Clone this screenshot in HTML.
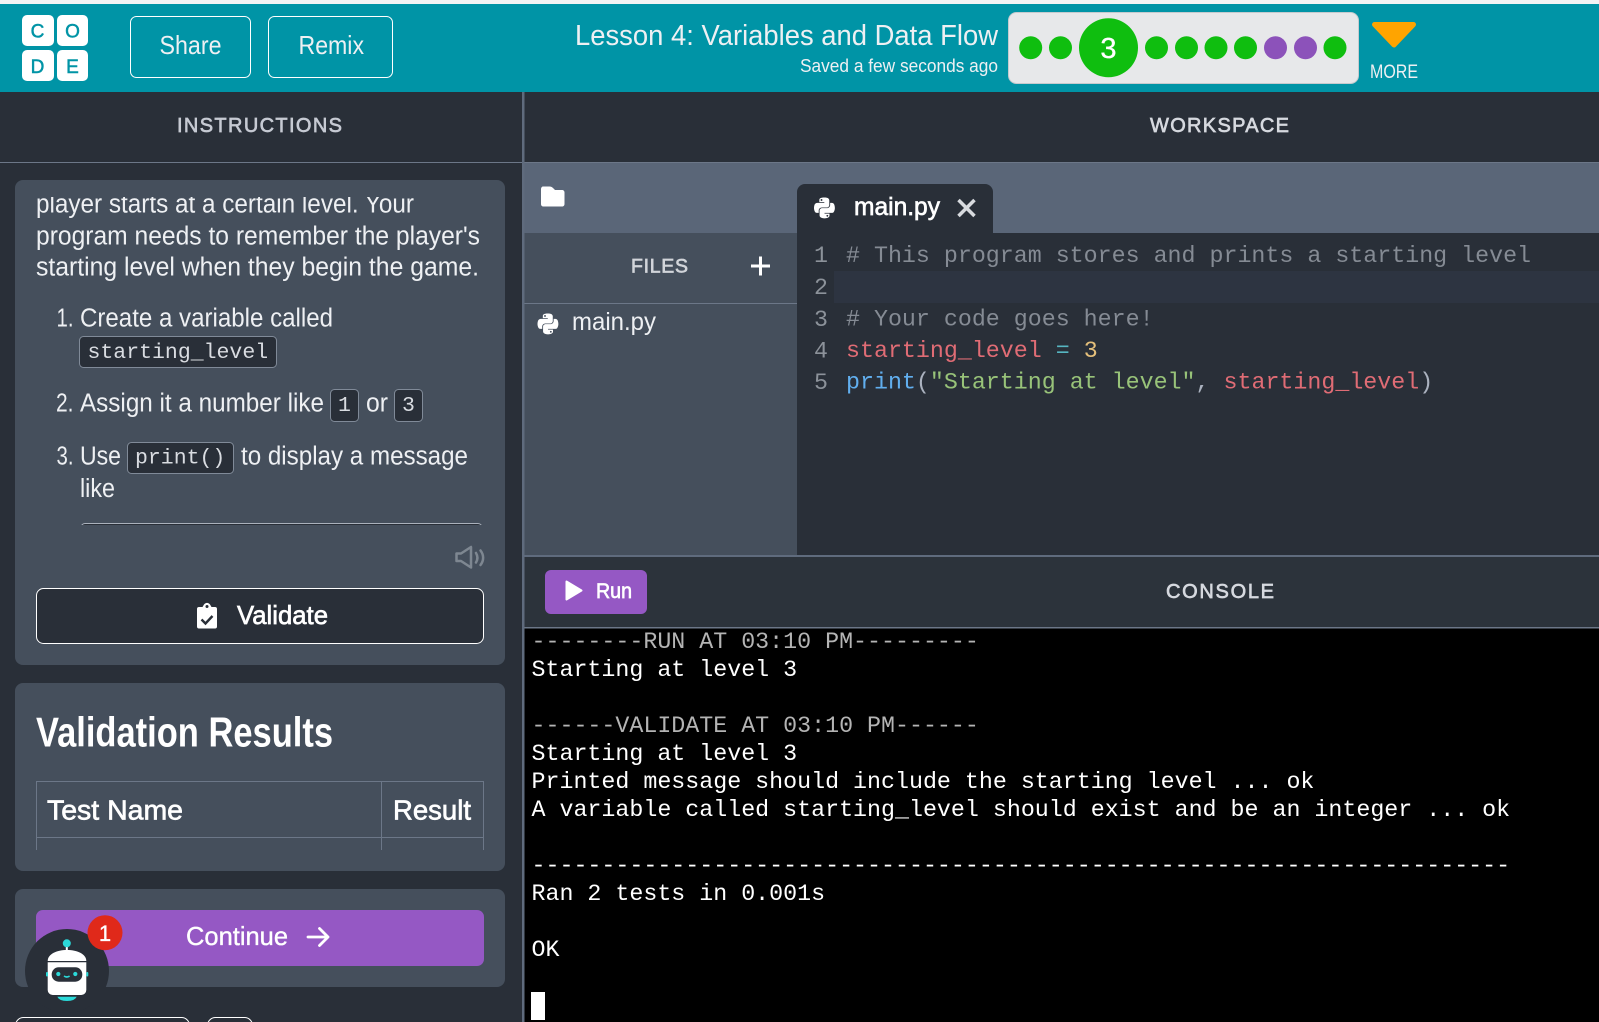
<!DOCTYPE html>
<html lang="en"><head><meta charset="utf-8"><title>Lesson 4: Variables and Data Flow</title>
<style>
html,body{margin:0;padding:0;width:1599px;height:1022px;overflow:hidden;background:#292f38}
svg{display:block}
text{font-family:"Liberation Sans",sans-serif;fill:#eef0f3;white-space:pre}
.m{font-family:"Liberation Mono",monospace}
.med{stroke-width:.35;stroke:currentColor}
.sb{stroke-width:.65;stroke:currentColor}
.con{font-size:23.3px;fill:#fff}
.gr{fill:#b4b4b4}
.ed{font-size:23.3px}
.num{fill:#8c929a}
.cm{fill:#858b94}
.lg{font-size:19px;fill:#0094a6;stroke:#0094a6;stroke-width:.5}
</style></head><body>
<svg xmlns="http://www.w3.org/2000/svg" width="1599" height="1022" viewBox="0 0 1599 1022">
<defs>
<clipPath id="c1"><rect x="15" y="197" width="490" height="328"/></clipPath>
<path id="py" d="M439.8 200.5c-7.7-30.9-22.3-54.2-53.4-54.2h-40.1v47.4c0 36.8-31.2 67.8-66.8 67.8H172.7c-29.2 0-53.4 25-53.4 54.3v101.8c0 29 25.2 46 53.4 54.3 33.8 9.9 66.3 11.7 106.8 0 26.9-7.8 53.4-23.5 53.4-54.3v-40.7H226.2v-13.6h160.2c31.1 0 42.6-21.7 53.4-54.2 11.2-33.5 10.7-65.7 0-108.6zM286.2 404c11.1 0 20.1 9.1 20.1 20.3 0 11.3-9 20.4-20.1 20.4-11 0-20.1-9.2-20.1-20.4.1-11.3 9.1-20.3 20.1-20.3zM167.8 248.1h106.8c29.7 0 53.4-24.5 53.4-54.3V91.9c0-29-24.4-50.7-53.4-55.6-35.8-5.9-74.7-5.6-106.8.1-45.2 8-53.4 24.7-53.4 55.6v40.7h106.9v13.6h-147c-31.1 0-58.3 18.7-66.8 54.2-9.8 40.7-10.2 66.1 0 108.6 7.6 31.6 25.7 54.2 56.8 54.2H101v-48.8c0-35.3 30.5-66.4 66.8-66.4zm-6.7-142.6c-11.1 0-20.1-9.1-20.1-20.3.1-11.3 9-20.4 20.1-20.4 11 0 20.1 9.2 20.1 20.4s-9 20.3-20.1 20.3z"/>
</defs>

<!-- page -->
<rect width="1599" height="1022" fill="#292f38"/>
<rect width="1599" height="4" fill="#f2f3f4"/>
<rect y="4" width="1599" height="88" fill="#0094a6"/>

<!-- logo -->
<g fill="#fff">
<rect x="22" y="15" width="32" height="31" rx="5"/><rect x="57" y="15" width="31" height="31" rx="5"/>
<rect x="22" y="50" width="32" height="31" rx="5"/><rect x="57" y="50" width="31" height="31" rx="5"/>
</g>
<g text-anchor="middle">
<text class="lg" x="37.500" y="37.500">C</text><text class="lg" x="72.500" y="37.500">O</text>
<text class="lg" x="37.500" y="73">D</text><text class="lg" x="72.500" y="73">E</text>
</g>

<!-- header buttons -->
<rect x="130.5" y="16.5" width="120" height="61" rx="6" fill="none" stroke="#fff"/>
<rect x="268.5" y="16.5" width="124" height="61" rx="6" fill="none" stroke="#fff"/>
<text x="159.5" y="54" font-size="26" textLength="62" lengthAdjust="spacingAndGlyphs">Share</text>
<text x="298.5" y="54" font-size="26" textLength="65.5" lengthAdjust="spacingAndGlyphs">Remix</text>

<text x="575" y="45" font-size="29" textLength="423" lengthAdjust="spacingAndGlyphs">Lesson 4: Variables and Data Flow</text>
<text x="800" y="72" font-size="18" textLength="198" lengthAdjust="spacingAndGlyphs">Saved a few seconds ago</text>

<!-- progress -->
<rect x="1008.5" y="12.5" width="350" height="71" rx="8" fill="#e7e8ea" stroke="#c6cace"/>
<g fill="#0fbe0f">
<circle cx="1030.7" cy="47.7" r="11.5"/><circle cx="1060.5" cy="47.7" r="11.5"/>
<circle cx="1108.5" cy="47.7" r="29.5"/>
<circle cx="1156.5" cy="47.7" r="11.5"/><circle cx="1186.5" cy="47.7" r="11.5"/><circle cx="1216" cy="47.7" r="11.5"/><circle cx="1245.5" cy="47.7" r="11.5"/><circle cx="1335" cy="47.7" r="11.5"/>
</g>
<circle cx="1275.5" cy="47.7" r="11.5" fill="#8c52ba"/><circle cx="1305.5" cy="47.7" r="11.5" fill="#8c52ba"/>
<text x="1108.5" y="58" font-size="29" class="med" text-anchor="middle" style="fill:#fff;color:#fff">3</text>
<path d="M1374.500 24.500h39L1394 45z" fill="#ffa400" stroke="#ffa400" stroke-width="5" stroke-linejoin="round"/>
<text x="1370" y="78" font-size="19" textLength="48" lengthAdjust="spacingAndGlyphs">MORE</text>

<!-- instructions panel -->
<rect x="0" y="162" width="522" height="1" fill="#6c7788"/>
<text x="177" y="132" font-size="20" class="sb" textLength="165" lengthAdjust="spacing" style="fill:#c6cad3;color:#c6cad3">INSTRUCTIONS</text>
<rect x="15" y="180" width="490" height="485" rx="8" fill="#454f5c"/>
<g clip-path="url(#c1)" font-size="25.5">
<text x="36" y="212.500" textLength="378" lengthAdjust="spacingAndGlyphs">player starts at a certain level. Your</text>
<text x="36" y="244.500" textLength="444" lengthAdjust="spacingAndGlyphs">program needs to remember the player's</text>
<text x="36" y="275.500" textLength="443" lengthAdjust="spacingAndGlyphs">starting level when they begin the game.</text>
<text x="56.500" y="326.500" textLength="17" lengthAdjust="spacingAndGlyphs">1.</text>
<text x="80" y="326.500" textLength="253" lengthAdjust="spacingAndGlyphs">Create a variable called</text>
<rect x="79.5" y="336.5" width="197" height="31" rx="4" fill="#292f38" stroke="#808a98"/>
<text x="87.5" y="358" class="m" font-size="21.5" style="fill:#d9dce1">starting_level</text>
<text x="56" y="411.500" textLength="17.500" lengthAdjust="spacingAndGlyphs">2.</text>
<text x="80" y="411.500" textLength="244" lengthAdjust="spacingAndGlyphs">Assign it a number like</text>
<rect x="330.5" y="389.5" width="28" height="32" rx="4" fill="#292f38" stroke="#808a98"/>
<text x="338" y="411" class="m" font-size="21.5" style="fill:#d9dce1">1</text>
<text x="366" y="411.500" textLength="22" lengthAdjust="spacingAndGlyphs">or</text>
<rect x="394.5" y="389.5" width="28" height="32" rx="4" fill="#292f38" stroke="#808a98"/>
<text x="402" y="411" class="m" font-size="21.5" style="fill:#d9dce1">3</text>
<text x="56.500" y="464.500" textLength="17" lengthAdjust="spacingAndGlyphs">3.</text>
<text x="80" y="464.500" textLength="41" lengthAdjust="spacingAndGlyphs">Use</text>
<rect x="127.5" y="442.5" width="106" height="31" rx="4" fill="#292f38" stroke="#808a98"/>
<text x="135" y="463.500" class="m" font-size="21.5" style="fill:#d9dce1">print()</text>
<text x="241" y="464.500" textLength="227" lengthAdjust="spacingAndGlyphs">to display a message</text>
<text x="80" y="497" textLength="35" lengthAdjust="spacingAndGlyphs">like</text>
<rect x="81" y="523.5" width="401" height="10" rx="4" fill="#292f38" stroke="#aab1bc"/>
</g>
<!-- speaker -->
<g fill="none" stroke="#7e8791" stroke-width="2.500" stroke-linejoin="round" stroke-linecap="round">
<path d="M456.500 553.500h4.500l10-6.500v20.500l-10-6.500h-4.500z"/>
<path d="M476 553c1.800 3 1.800 6.500 0 9.500M480.500 550.500c3.500 4.500 3.500 10 0 14.500"/>
</g>
<rect x="36.500" y="588.500" width="447" height="55" rx="7" fill="#292f38" stroke="#fff"/>
<path d="M199 607h3.500l1.500-2.500a3.600 3.600 0 0 1 6 0l1.500 2.500h3.500a2 2 0 0 1 2 2v17.500a2 2 0 0 1-2 2h-16a2 2 0 0 1-2-2v-17.500a2 2 0 0 1 2-2z" fill="#fff"/>
<circle cx="207" cy="606.500" r="1.500" fill="#292f38"/>
<path d="M201.500 619.500l4 4 7-7.500" fill="none" stroke="#292f38" stroke-width="2.400"/>
<text x="237" y="624" font-size="26" class="sb" textLength="91" lengthAdjust="spacingAndGlyphs" style="fill:#fff;color:#fff">Validate</text>

<!-- validation card -->
<rect x="15" y="683" width="490" height="188" rx="8" fill="#454f5c"/>
<text x="36" y="746.700" font-size="42" font-weight="700" textLength="297" lengthAdjust="spacingAndGlyphs" style="fill:#fff">Validation Results</text>
<path d="M36.500 850V781.500H483.500V850M381.500 781.500V850M36.500 837.500H483.500" fill="none" stroke="#6c7788"/>
<text x="47" y="819.500" font-size="28" class="sb" textLength="136" lengthAdjust="spacingAndGlyphs" style="fill:#fff;color:#fff">Test Name</text>
<text x="393" y="819.500" font-size="28" class="sb" textLength="78" lengthAdjust="spacingAndGlyphs" style="fill:#fff;color:#fff">Result</text>

<!-- continue -->
<rect x="15" y="889" width="490" height="98" rx="8" fill="#454f5c"/>
<rect x="36" y="910" width="448" height="56" rx="7" fill="#9558c4"/>
<text x="186" y="945" font-size="26" class="med" textLength="102" lengthAdjust="spacingAndGlyphs" style="fill:#fff;color:#fff">Continue</text>
<path d="M308 937h20M319.500 928.500l8.500 8.500-8.500 8.500" fill="none" stroke="#fff" stroke-width="2.800" stroke-linecap="round" stroke-linejoin="round"/>

<!-- bottom buttons -->
<rect x="15.500" y="1017.500" width="174" height="30" rx="8" fill="#292f38" stroke="#fff"/>
<rect x="207.500" y="1017.500" width="45" height="30" rx="8" fill="#292f38" stroke="#fff"/>

<!-- bot -->
<circle cx="67" cy="971" r="42" fill="#292f38"/>
<circle cx="105" cy="932.700" r="17.500" fill="#e0291a"/>
<text x="105" y="941" font-size="22" class="med" text-anchor="middle" style="fill:#fff;color:#fff">1</text>
<rect x="65.800" y="945" width="2" height="6" fill="#fff"/>
<circle cx="66.800" cy="943.300" r="4" fill="#2bd9d9"/>
<path d="M47.700 961c0-7 9-11 19.300-11s19.300 4 19.300 11z" fill="#fff"/>
<path d="M47.700 962.300h38.600V990a5 5 0 0 1-5 5H52.700a5 5 0 0 1-5-5z" fill="#fff"/>
<rect x="46" y="972" width="2" height="4.500" rx="1" fill="#2bd9d9"/><rect x="86.300" y="972" width="2" height="4.500" rx="1" fill="#2bd9d9"/>
<rect x="51.700" y="967.300" width="30.600" height="14.400" rx="7" fill="#292f38"/>
<circle cx="58.300" cy="974" r="2.100" fill="#2bd9d9"/><circle cx="75.300" cy="974" r="2.100" fill="#2bd9d9"/>
<path d="M64 976q2.800 2 5.600 0" fill="none" stroke="#2bd9d9" stroke-width="1.600"/>
<path d="M57.300 996.700h19.400q-2 4.300-9.700 4.300t-9.700-4.300z" fill="#2bd9d9"/>

<!-- divider -->
<rect x="522" y="92" width="2.500" height="930" fill="#5f6b7d"/>

<!-- workspace -->
<text x="1150" y="132" font-size="20" class="sb" textLength="139" lengthAdjust="spacing" style="fill:#d6d9df;color:#d6d9df">WORKSPACE</text>
<rect x="524.500" y="162" width="1075" height="71" fill="#5a6678"/>
<rect x="524.500" y="162" width="1075" height="1" fill="#6c7788"/>
<path d="M543 186.500h6.500c1.500 0 2.500.5 3.500 1.500l2 2h7c1.500 0 2.500 1 2.500 2.500v11.500c0 1.500-1 2.500-2.500 2.500h-18.500c-1.500 0-2.500-1-2.500-2.500v-15c0-1.500 1-2.500 2-2.500z" fill="#fff"/>
<rect x="524.500" y="233" width="273" height="323" fill="#454f5c"/>
<text x="631" y="272.500" font-size="19.500" class="sb" textLength="57" lengthAdjust="spacing" style="fill:#d2d5da;color:#d2d5da">FILES</text>
<path d="M751 266h19M760.500 256.500v19" stroke="#fff" stroke-width="3" fill="none"/>
<rect x="524.500" y="303" width="273" height="1" fill="#6c7788"/>
<use href="#py" transform="translate(537.500,312) scale(.0466)" fill="#fff"/>
<text x="572" y="330" font-size="25" textLength="84" lengthAdjust="spacingAndGlyphs">main.py</text>

<!-- tab -->
<path d="M797 233v-41a8 8 0 0 1 8-8h180a8 8 0 0 1 8 8v41z" fill="#292f38"/>
<use href="#py" transform="translate(814,196) scale(.0466)" fill="#fff"/>
<text x="854" y="215" font-size="25" class="sb" textLength="86" lengthAdjust="spacingAndGlyphs" style="fill:#fff;color:#fff">main.py</text>
<path d="M958.500 200l16 16M974.500 200l-16 16" stroke="#d8dbdf" stroke-width="3.500" fill="none"/>

<!-- editor -->
<rect x="797" y="233" width="802" height="323" fill="#292f38"/>
<rect x="834" y="271" width="765" height="32" fill="#2d3441"/>
<g class="m">
<text class="m ed num" x="814" y="262">1</text><text class="m ed num" x="814" y="294">2</text><text class="m ed num" x="814" y="326">3</text><text class="m ed num" x="814" y="357.500">4</text><text class="m ed num" x="814" y="389">5</text>
<text class="m ed cm" x="846" y="262"># This program stores and prints a starting level</text>
<text class="m ed cm" x="846" y="325.500"># Your code goes here!</text>
<text class="m ed" x="846" y="357"><tspan style="fill:#e06c75">starting_level</tspan> <tspan style="fill:#56b6c2">=</tspan> <tspan style="fill:#e5c07b">3</tspan></text>
<text class="m ed" x="846" y="388.500"><tspan style="fill:#61afef">print</tspan><tspan style="fill:#abb2bf">(</tspan><tspan style="fill:#98c379">"Starting at level"</tspan><tspan style="fill:#abb2bf">, </tspan><tspan style="fill:#e06c75">starting_level</tspan><tspan style="fill:#abb2bf">)</tspan></text>
</g>

<!-- console -->
<rect x="524.500" y="555" width="1075" height="2" fill="#5f6b7d"/>
<rect x="524.500" y="557" width="1075" height="70" fill="#2c333b"/>
<rect x="524.500" y="627" width="1075" height="1.500" fill="#6c7788"/>
<rect x="545" y="570" width="102" height="44" rx="6" fill="#9558c4"/>
<path d="M566.500 581.500l15 9-15 9z" fill="#fff" stroke="#fff" stroke-width="2" stroke-linejoin="round"/>
<text x="596" y="598" font-size="21" class="sb" textLength="36" lengthAdjust="spacingAndGlyphs" style="fill:#fff;color:#fff">Run</text>
<text x="1166" y="598" font-size="20" class="sb" textLength="108" lengthAdjust="spacing" style="fill:#d6d9df;color:#d6d9df">CONSOLE</text>
<rect x="524.500" y="628.500" width="1075" height="393.500" fill="#000"/>
<text class="m con gr" x="531.500" y="648">--------RUN AT 03:10 PM---------</text>
<text class="m con" x="531.500" y="676">Starting at level 3</text>
<text class="m con gr" x="531.500" y="732">------VALIDATE AT 03:10 PM------</text>
<text class="m con" x="531.500" y="760">Starting at level 3</text>
<text class="m con" x="531.500" y="788">Printed message should include the starting level ... ok</text>
<text class="m con" x="531.500" y="816">A variable called starting_level should exist and be an integer ... ok</text>
<text class="m con" x="531.500" y="872">----------------------------------------------------------------------</text>
<text class="m con" x="531.500" y="900">Ran 2 tests in 0.001s</text>
<text class="m con" x="531.500" y="956">OK</text>
<rect x="531" y="992" width="14" height="28" fill="#fff"/>
</svg>
</body></html>
